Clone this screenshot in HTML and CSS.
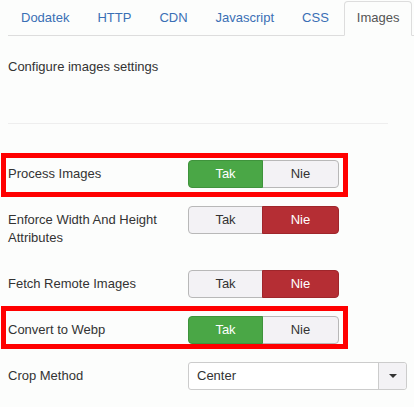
FILE: index.html
```html
<!DOCTYPE html>
<html lang="pl">
<head>
<meta charset="utf-8">
<title>Images</title>
<link rel="stylesheet" href="styles.css">
</head>
<body>
<ul class="tabs">
  <li><a class="tab">Dodatek</a></li>
  <li><a class="tab">HTTP</a></li>
  <li><a class="tab">CDN</a></li>
  <li><a class="tab">Javascript</a></li>
  <li><a class="tab">CSS</a></li>
  <li><a class="tab active">Images</a></li>
</ul>
<p class="desc">Configure images settings</p>
<div class="sep"></div>
<div class="form">
  <div class="row hl hl-a">
    <div class="label">Process Images</div>
    <div class="toggle"><span class="btn on-yes">Tak</span><span class="btn">Nie</span></div>
  </div>
  <div class="row">
    <div class="label">Enforce Width And Height Attributes</div>
    <div class="toggle"><span class="btn">Tak</span><span class="btn on-no">Nie</span></div>
  </div>
  <div class="row">
    <div class="label">Fetch Remote Images</div>
    <div class="toggle"><span class="btn">Tak</span><span class="btn on-no">Nie</span></div>
  </div>
  <div class="row hl hl-b">
    <div class="label">Convert to Webp</div>
    <div class="toggle"><span class="btn on-yes">Tak</span><span class="btn">Nie</span></div>
  </div>
  <div class="row">
    <div class="label">Crop Method</div>
    <div class="select"><span class="select-value">Center</span><span class="select-arrow"><span class="caret"></span></span></div>
  </div>
</div>
</body>
</html>
```
FILE: styles.css
```css
html, body {
  margin: 0;
  padding: 0;
  background: #fcfdfc;
}
body {
  padding-left: 8px;
  font-family: "Liberation Sans", Arial, sans-serif;
  font-size: 13px;
  color: #333;
  overflow: hidden;
}
.tabs {
  list-style: none;
  margin: 0;
  padding: 1px 0 0;
  display: flex;
  border-bottom: 1px solid #ddd;
}
.tab {
  display: block;
  padding: 7px 12px 8px;
  line-height: 18px;
  border: 1px solid transparent;
  border-radius: 4px 4px 0 0;
  margin-right: 2px;
  margin-bottom: -1px;
  color: #3a6fb5;
}
.tab.active {
  color: #555;
  background: #fcfdfc;
  border-color: #ddd;
  border-bottom-color: transparent;
}
.desc {
  margin: 22px 0 0;
  line-height: 18px;
}
.sep {
  margin-top: 47px;
  width: 380px;
  border-top: 1px solid #eee;
}
.form {
  margin-top: 36px;
}
.row {
  display: flex;
  margin-bottom: 18px;
  position: relative;
}
.label {
  width: 180px;
  padding: 5px 0;
  line-height: 18px;
  box-sizing: border-box;
  padding-right: 12px;
}
.hl::after {
  content: "";
  position: absolute;
  left: -7px;
  width: 347px;
  border: 5px solid #ff0000;
  box-sizing: border-box;
}
.hl-a::after {
  top: -7px;
  height: 44px;
}
.hl-b::after {
  top: -10px;
  height: 43px;
}
.toggle {
  display: flex;
  height: 28px;
}
.btn {
  display: block;
  box-sizing: border-box;
  height: 28px;
  line-height: 18px;
  padding: 4px 0;
  text-align: center;
  border: 1px solid #b8b8b8;
  background: #f3f2f5;
  color: #333;
}
.btn:first-child {
  width: 75px;
  border-radius: 4px 0 0 4px;
}
.btn:last-child {
  width: 77px;
  margin-left: -1px;
  border-radius: 0 4px 4px 0;
}
.btn.on-yes {
  background: #4aa746;
  border-color: #3f933c;
  color: #fff;
  position: relative;
}
.btn.on-no {
  background: #b52e34;
  border-color: #9f262b;
  color: #fff;
  position: relative;
}
.select {
  display: flex;
  width: 219px;
  height: 28px;
  box-sizing: border-box;
  border: 1px solid #ccc;
  border-radius: 3px;
  background: #fff;
}
.select-value {
  flex: 1;
  padding-left: 8px;
  line-height: 26px;
  color: #333;
}
.select-arrow {
  width: 27px;
  background: #f3f2f5;
  border-left: 1px solid #ccc;
  border-radius: 0 3px 3px 0;
  display: flex;
  align-items: center;
  justify-content: center;
}
.caret {
  width: 0;
  height: 0;
  border-left: 4px solid transparent;
  border-right: 4px solid transparent;
  border-top: 4px solid #333;
}
```
